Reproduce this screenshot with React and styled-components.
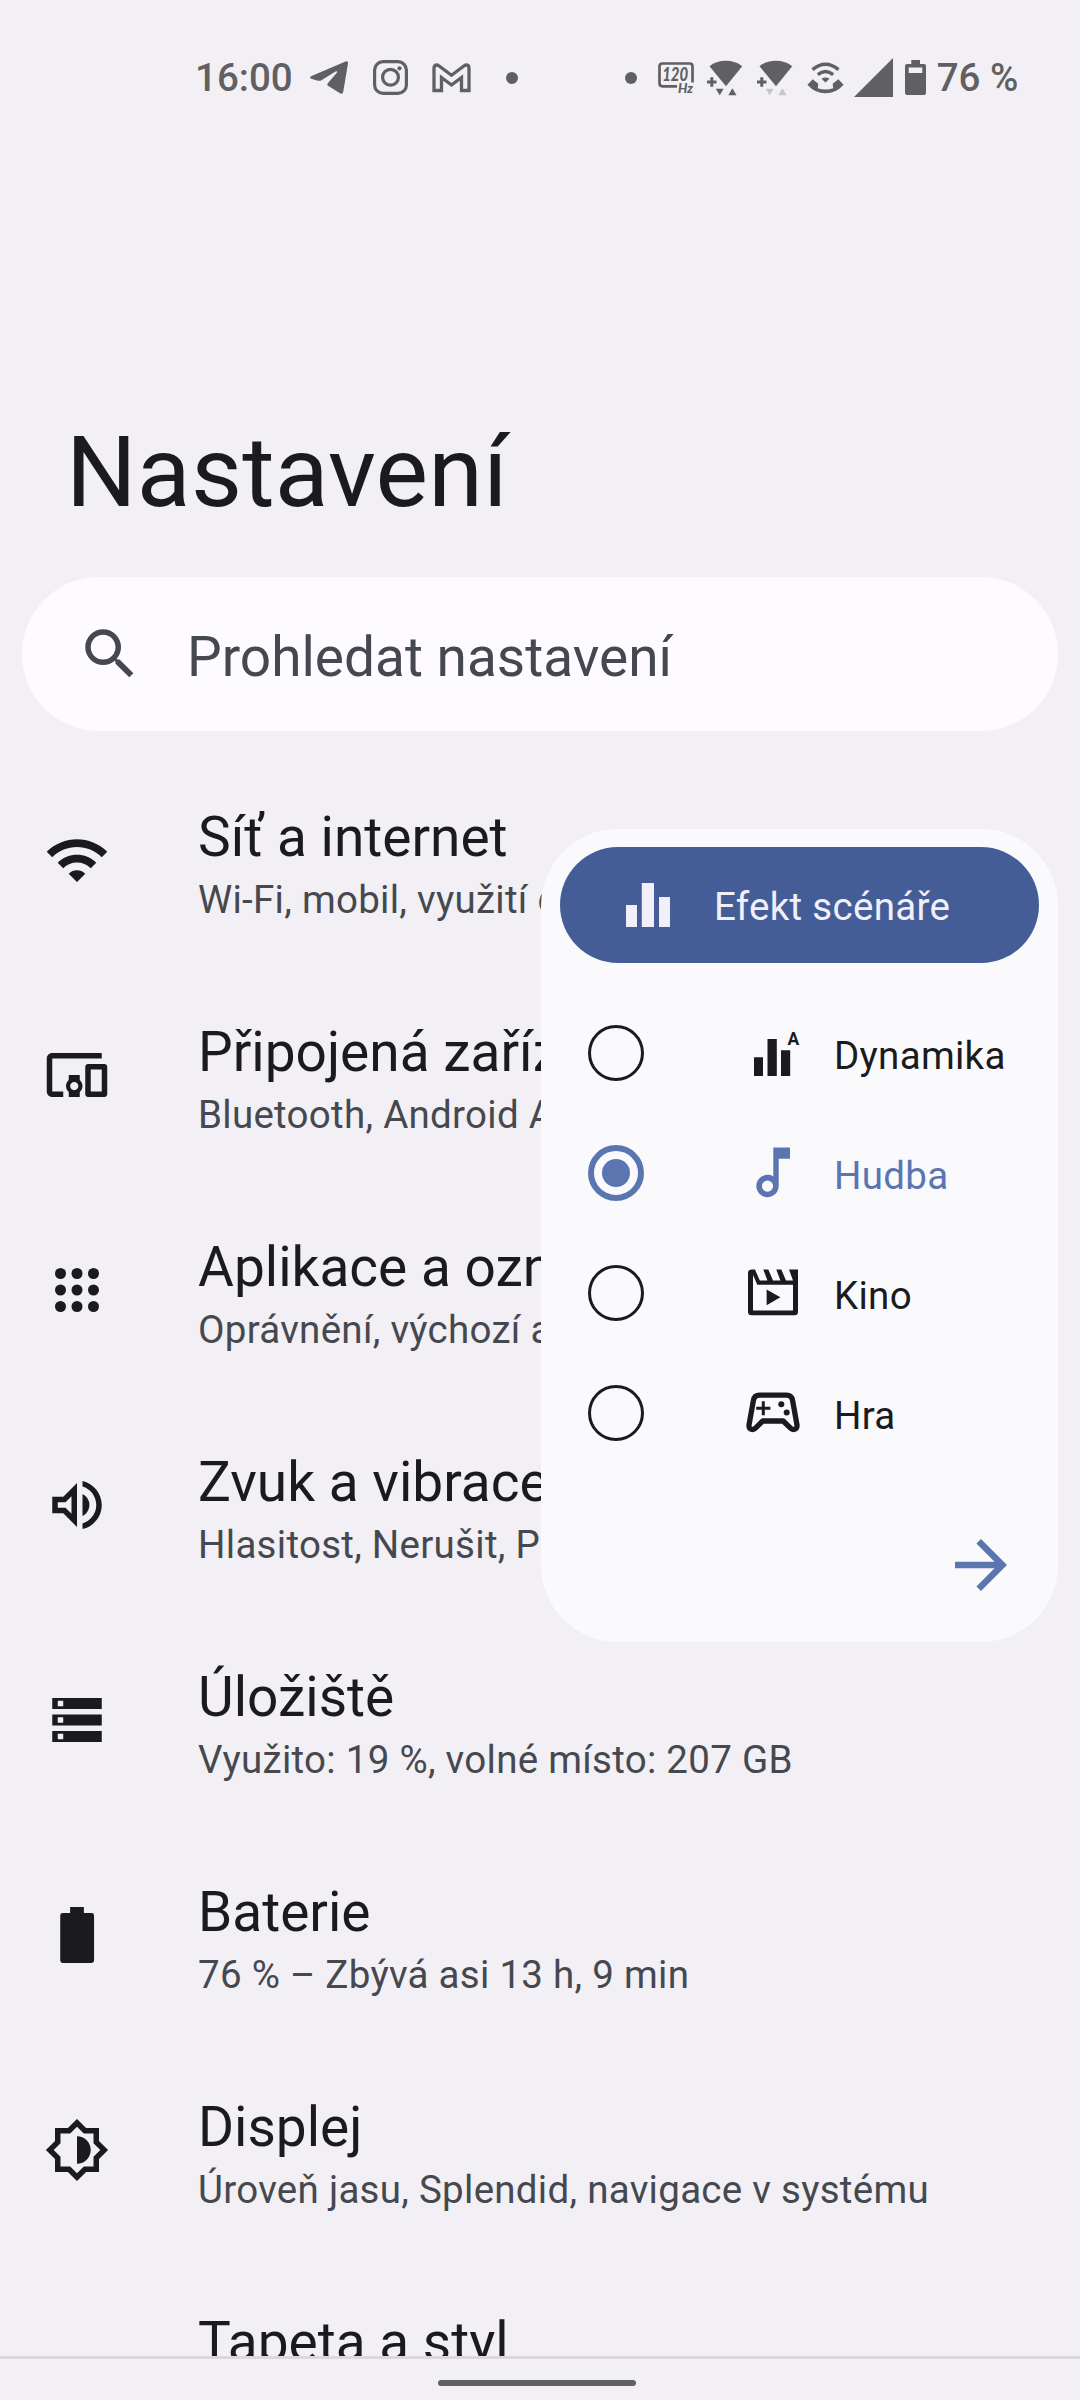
import React, { useState } from "react";
import styled, { createGlobalStyle } from "styled-components";
import { MdSearch, MdWifi, MdDevicesOther, MdOutlineVolumeUp, MdArrowForward } from "react-icons/md";

const AppsIcon = () => (
  <svg viewBox="0 0 24 24" fill="currentColor">
    {[6, 12, 18].map((y) => [6, 12, 18].map((x) => <circle key={`${x}-${y}`} cx={x} cy={y} r="2" />))}
  </svg>
);

const StorageIcon = () => (
  <svg viewBox="0 0 24 24" fill="currentColor">
    <path d="M3 20h18v-4H3v4zm2-3h2v2H5v-2zM3 4v4h18V4H3zm4 3H5V5h2v2zm-4 7h18v-4H3v4zm2-3h2v2H5v-2z" />
  </svg>
);

const BatteryIcon = () => (
  <svg viewBox="0 0 24 24" fill="currentColor">
    <path d="M9.5 1.8h5V4h2.8a.9.9 0 0 1 .9.9v16.4a.9.9 0 0 1-.9.9H6.8a.9.9 0 0 1-.9-.9V4.9a.9.9 0 0 1 .9-.9h2.7z" />
  </svg>
);

const DisplayIcon = () => (
  <svg viewBox="0 0 24 24" fill="currentColor">
    <path d="M20 8.69V4h-4.69L12 .69 8.69 4H4v4.69L.69 12 4 15.31V20h4.69L12 23.31 15.31 20H20v-4.69L23.31 12 20 8.69zm-2 5.79V18h-3.52L12 20.48 9.52 18H6v-3.52L3.52 12 6 9.52V6h3.52L12 3.52 14.48 6H18v3.52L20.48 12 18 14.48zM12 7v10c2.76 0 5-2.24 5-5s-2.24-5-5-5z" />
  </svg>
);

const BarsIcon = () => (
  <svg viewBox="0 0 66 66" fill="currentColor">
    <path d="M11 33h11v22H11zM26.8 11H39v44H26.8zM44 25h11v30H44z" />
  </svg>
);

const DynamicIcon = () => (
  <svg viewBox="0 0 66 66" fill="currentColor">
    <path d="M14 37.3h9V56h-9zM27.5 19h9.3v37h-9.3zM41 30.3h9.2V56H41z" />
    <text x="47.6" y="24.8" fontSize="17.5" fontWeight="700" fontFamily="Roboto, sans-serif">A</text>
  </svg>
);

const MusicIcon = () => (
  <svg viewBox="0 0 66 66" fill="currentColor">
    <path d="M33.3 7.5H50V18.7H38.7V46a11.2 11.2 0 1 1-5.4-9.6zM27.5 40.5a5.6 5.6 0 1 0 0 11.2a5.6 5.6 0 1 0 0-11.2z" fillRule="evenodd" />
  </svg>
);

const CinemaIcon = () => (
  <svg viewBox="0 0 66 66" fill="currentColor">
    <path
      fillRule="evenodd"
      d="M11.5 9.500H15L19.8 20.5H27.4L23.3 9.500H28.3L33 20.5H40.4L36.3 9.500H41.3L46 20.5H53L49 9.500H58V51.7Q58 55.2 54.5 55.2H11.5Q8 55.2 8 51.7V13Q8 9.500 11.5 9.500zM13 15V50.4H53V24.7H17.3z"
    />
    <path d="M26.6 29.5L40.4 37.3L26.6 45.2z" />
  </svg>
);

const GameIcon = () => (
  <svg viewBox="0 0 66 66" fill="currentColor">
    <path
      d="M19.5 15.2H46.5Q51.7 15.2 52.6 20.5L57 45Q57.3 49.5 53.5 49.5Q51.8 49.5 50.5 48.2L43.2 41H22.8L15.5 48.2Q14.2 49.5 12.5 49.5Q8.7 49.5 9 45L13.4 20.5Q14.3 15.2 19.5 15.2z"
      fill="none"
      stroke="currentColor"
      strokeWidth="5.3"
      strokeLinejoin="round"
    />
    <path d="M21.8 21.2h3v5.5h5.6v3h-5.6v5.5h-3v-5.5h-5.6v-3h5.6z" />
    <circle cx="41.3" cy="24.2" r="3" />
    <circle cx="46.7" cy="32.5" r="3" />
  </svg>
);

// Wi-Fi fan with a plus sign and the two traffic arrows under it
const FanIcon = ({ arrows = "currentColor" }) => (
  <svg viewBox="0 0 36 36" width="36" height="36" fill="currentColor">
    <path d="M2.5 6.3Q9 .8 18.8 .8T35.2 6.3L19 26.3z" />
    <path d="M3.300 17.2h3v3.3h3.200v3H6.300v3.3h-3v-3.300H0v-3h3.300z" />
    <path d="M8.8 28.7h7.8l-3.9 6.6zM21.3 35.3h8.200l-4.100-7z" fill={arrows} />
  </svg>
);

const settings = [
  { icon: <MdWifi />, title: "Síť a internet", info: "Wi-Fi, mobil, využití dat a hotspot" },
  { icon: <MdDevicesOther />, title: "Připojená zařízení", info: "Bluetooth, Android Auto" },
  { icon: <AppsIcon />, title: "Aplikace a oznámení", info: "Oprávnění, výchozí aplikace" },
  { icon: <MdOutlineVolumeUp />, title: "Zvuk a vibrace", info: "Hlasitost, Nerušit, Předvolby" },
  { icon: <StorageIcon />, title: "Úložiště", info: "Využito: 19 %, volné místo: 207 GB" },
  { icon: <BatteryIcon />, title: "Baterie", info: "76 % – Zbývá asi 13 h, 9 min" },
  { icon: <DisplayIcon />, title: "Displej", info: "Úroveň jasu, Splendid, navigace v systému" },
  { icon: null, title: "Tapeta a styl", info: "" },
];

const effects = [
  { id: "dynamic", label: "Dynamika", icon: <DynamicIcon /> },
  { id: "music", label: "Hudba", icon: <MusicIcon /> },
  { id: "cinema", label: "Kino", icon: <CinemaIcon /> },
  { id: "game", label: "Hra", icon: <GameIcon /> },
];

const StatusBar = () => (
  <Status>
    <StatusText>16:00</StatusText>
    <StatusIcon $left={17}>
      <svg viewBox="0 0 38 33" width="38" height="33" fill="currentColor">
        <path d="M1 15.3L35.5 .5Q38.2 -.4 38 2.5L33.2 31Q32.6 33.6 30 32.2L18 24.8Q16.6 23.5 18 22L27 11.6Q27.8 9.6 25.5 10.5L11.5 19.3Q9.5 20.3 7 19.5L1.2 17.8Q-.8 16.5 1 15.3z" />
      </svg>
    </StatusIcon>
    <StatusIcon $left={25}>
      <svg viewBox="0 0 35 35" width="35" height="35" fill="none" stroke="currentColor" strokeWidth="3.2">
        <rect x="1.6" y="1.6" width="31.8" height="31.8" rx="8.5" />
        <circle cx="17.5" cy="17.3" r="7.9" />
        <circle cx="26.5" cy="8.3" r="2.1" fill="currentColor" stroke="none" />
      </svg>
    </StatusIcon>
    <StatusIcon $left={24}>
      <svg viewBox="0 0 39 30" width="39" height="30" fill="none" stroke="currentColor" strokeWidth="3.3">
        <path d="M2 27.5V5Q2 2 5 2Q6 2 7.5 3.2L19.5 12.2L31.5 3.2Q33 2 34 2Q37 2 37 5V27.5H29.5V14.5L19.5 22L9.5 14.5V27.5z" />
      </svg>
    </StatusIcon>
    <Dot $left={35} />
    <Dot $left={107} />
    <StatusIcon $left={21}>
      <svg viewBox="0 0 37 32" width="37" height="32" fill="currentColor">
        <path d="M19 24.3H4.5Q1.5 24.3 1.500 21.3V4.5Q1.5 1.5 4.5 1.5H32Q34.500 1.5 34.5 4.5V20.5" fill="none" stroke="currentColor" strokeWidth="2.7" />
        <text x="4.2" y="19.4" fontSize="18.5" fontWeight="900" fontStyle="italic" fontFamily="Lato, sans-serif" textLength="26" lengthAdjust="spacingAndGlyphs">120</text>
        <text x="20" y="31" fontSize="13" fontWeight="900" fontStyle="italic" fontFamily="Lato, sans-serif" textLength="15" lengthAdjust="spacingAndGlyphs">Hz</text>
      </svg>
    </StatusIcon>
    <StatusIcon $left={12}>
      <FanIcon />
    </StatusIcon>
    <StatusIcon $left={14}>
      <FanIcon arrows="#c6c5ca" />
    </StatusIcon>
    <StatusIcon $left={14}>
      <svg viewBox="0 0 37 32" width="37" height="32" fill="none" stroke="currentColor" strokeWidth="3.4">
        <path d="M5.5 7.6Q18.5 -3.2 31.5 7.6M10.8 12.6Q18.5 6.3 26.2 12.6" />
        <path d="M14.5 16.8Q18.5 14 22.5 16.8L18.5 20.6z" fill="currentColor" stroke="none" />
        <path d="M.4 22.7L5.7 17.2L11.3 21.7L10.8 26.2Q18.5 28.8 26.2 26.2L25.7 21.7L31.3 17.2L36.6 22.7Q29 31.3 18.5 31.3T.4 22.7z" fill="currentColor" stroke="none" />
      </svg>
    </StatusIcon>
    <StatusIcon $left={10}>
      <svg viewBox="0 0 39 39" width="39" height="39" fill="currentColor">
        <path d="M0 39L39 0V39z" />
      </svg>
    </StatusIcon>
    <StatusIcon $left={12}>
      <svg viewBox="0 0 21 36" width="21" height="36" fill="currentColor">
        <path d="M6.3 0H15v4h4q2 0 2 2v27q0 2-2 2H2q-2 0-2-2V6q0-2 2-2h4.3zM3.7 7.5V13h13.6V7.5z" fillRule="evenodd" />
      </svg>
    </StatusIcon>
    <StatusText $left={11}>76 %</StatusText>
  </Status>
);

const App = () => {
  const [selected, setSelected] = useState("music");

  return (
    <>
      <GlobalStyle />
      <Screen>
        <StatusBar />
        <Heading>Nastavení</Heading>
        <SearchBar>
          <MdSearch />
          <span>Prohledat nastavení</span>
        </SearchBar>
        <List>
          {settings.map((item) => (
            <Item key={item.title}>
              <ItemIcon>{item.icon}</ItemIcon>
              <ItemText>
                <ItemTitle>{item.title}</ItemTitle>
                <ItemInfo>{item.info}</ItemInfo>
              </ItemText>
            </Item>
          ))}
        </List>
        <NavBar>
          <NavHandle />
        </NavBar>

        <Popup>
          <PopupHeader>
            <BarsIcon />
            <span>Efekt scénáře</span>
          </PopupHeader>
          <Options>
            {effects.map((effect) => (
              <Option key={effect.id} $active={effect.id === selected} onClick={() => setSelected(effect.id)}>
                <Radio $active={effect.id === selected} />
                {effect.icon}
                <span>{effect.label}</span>
              </Option>
            ))}
          </Options>
          <NextButton title="Další">
            <MdArrowForward />
          </NextButton>
        </Popup>
      </Screen>
    </>
  );
};

const GlobalStyle = createGlobalStyle`
  * {
    box-sizing: border-box;
  }

  body {
    margin: 0;
    background: #f2f0f5;
    font-family: Roboto, sans-serif;
    color: #1b1b1d;
  }

  svg {
    display: block;
    flex-shrink: 0;
  }
`;

const Screen = styled.div`
  position: relative;
  display: flex;
  flex-direction: column;
  width: 1080px;
  height: 2400px;
  overflow: hidden;
  background: #f2f0f5;
`;

const Status = styled.div`
  display: flex;
  align-items: center;
  height: 155px;
  flex-shrink: 0;
  padding-left: 195px;
  color: #606062;
`;

const StatusText = styled.span`
  font-size: 38.5px;
  font-weight: 500;
  line-height: 46px;
  padding-top: 1px;
  white-space: nowrap;
  margin-left: ${({ $left }) => $left || 0}px;
`;

const StatusIcon = styled.span`
  margin-left: ${({ $left }) => $left}px;
`;

const Dot = styled.span`
  width: 12px;
  height: 12px;
  border-radius: 50%;
  background: currentColor;
  margin-left: ${({ $left }) => $left}px;
`;

const Heading = styled.h1`
  margin: 259px 0 47px 66px;
  font-size: 99px;
  font-weight: 400;
  line-height: 116px;
  letter-spacing: 0.2px;
  flex-shrink: 0;
`;

const SearchBar = styled.div`
  display: flex;
  align-items: center;
  gap: 44px;
  height: 154px;
  flex-shrink: 0;
  margin: 0 22px;
  padding-left: 55px;
  border-radius: 77px;
  background: #fdfbff;
  color: #46484f;
  font-size: 55px;
  line-height: 64px;

  svg {
    width: 66px;
    height: 66px;
  }

  span {
    padding-top: 6px;
  }
`;

const List = styled.div`
  flex: 1;
  min-height: 0;
  overflow: hidden;
  padding-top: 21px;
`;

const Item = styled.div`
  display: flex;
  align-items: center;
  height: 215px;
  padding-left: 44px;
`;

const ItemIcon = styled.div`
  width: 154px;
  flex-shrink: 0;

  svg {
    width: 66px;
    height: 66px;
  }
`;

const ItemText = styled.div`
  display: flex;
  flex-direction: column;
  gap: 8px;
  height: 117px;
  margin-top: 8px;
  white-space: nowrap;
`;

const ItemTitle = styled.div`
  font-size: 55px;
  line-height: 64px;
`;

const ItemInfo = styled.div`
  font-size: 38.5px;
  line-height: 45px;
  letter-spacing: 0.28px;
  color: #46484f;
`;

const NavBar = styled.div`
  display: flex;
  justify-content: center;
  height: 44px;
  flex-shrink: 0;
  padding-top: 21px;
  border-top: 3px solid #dad8dd;
`;

const NavHandle = styled.div`
  width: 198px;
  height: 6px;
  margin-right: 6px;
  border-radius: 3px;
  background: #606062;
`;

const Popup = styled.div`
  position: absolute;
  top: 829px;
  left: 541px;
  display: flex;
  flex-direction: column;
  width: 517px;
  height: 813px;
  padding: 18px 19px 0;
  border-radius: 77px;
  background: #fafafd;
`;

const PopupHeader = styled.div`
  display: flex;
  align-items: center;
  gap: 33px;
  height: 116px;
  flex-shrink: 0;
  padding-left: 55px;
  border-radius: 58px;
  background: #445d97;
  color: #f1f0fa;
  font-size: 38.5px;
  line-height: 45px;
  letter-spacing: 0.3px;

  svg {
    width: 66px;
    height: 66px;
  }

  span {
    padding-top: 3px;
  }
`;

const Options = styled.div`
  padding: 30px 0 0 28px;
`;

const Option = styled.div`
  display: flex;
  align-items: center;
  height: 120px;
  cursor: pointer;
  color: ${({ $active }) => ($active ? "#5b75b0" : "#1b1b1d")};
  font-size: 38.5px;
  line-height: 45px;
  letter-spacing: 0.3px;

  svg {
    width: 66px;
    height: 66px;
    margin: 0 28px 0 96px;
  }

  span {
    padding-top: 4px;
  }
`;

const Radio = styled.div`
  display: flex;
  align-items: center;
  justify-content: center;
  width: 56px;
  height: 56px;
  border-radius: 50%;
  border: ${({ $active }) => ($active ? "6px" : "3px")} solid currentColor;

  &::after {
    content: "";
    width: 28px;
    height: 28px;
    border-radius: 50%;
    background: ${({ $active }) => ($active ? "currentColor" : "transparent")};
  }
`;

const NextButton = styled.div`
  align-self: flex-end;
  margin: 53px 19px 0 0;
  color: #5b75b0;

  svg {
    width: 78px;
    height: 78px;
  }
`;

export default App;
